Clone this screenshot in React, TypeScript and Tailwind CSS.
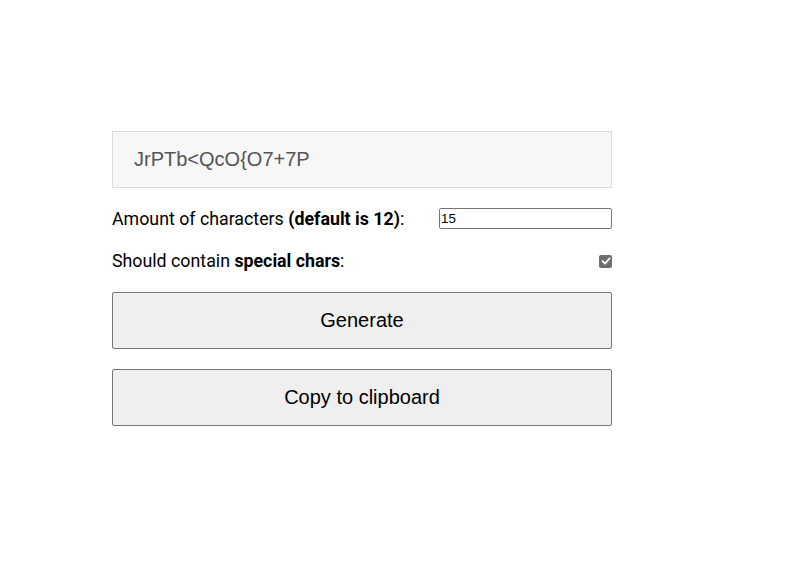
export default function App() {
  return (
    <div className="min-h-[577px] w-full bg-white pt-[131px] pl-[112px]">
      <div className="w-[500px] flex flex-col">
        <div className="h-[57px] flex items-center pl-[21px] pb-[1px] bg-[#f7f7f7] border border-[#dcdcdc] font-['Liberation_Sans',Arial,sans-serif] text-[20px] text-[#555555]">
          JrPTb&lt;QcO{"{"}O7+7P
        </div>

        <div className="mt-[20px] h-[21px] flex items-center justify-between font-['Roboto',sans-serif] text-[17.8px] text-black">
          <span className="pt-[2px]">
            Amount of characters <b className="font-bold">(default is 12)</b>:
          </span>
          <input
            type="text"
            defaultValue="15"
            className="w-[173px] h-[21px] border border-[#767676] rounded-[2px] px-[1px] font-['Liberation_Sans',Arial,sans-serif] text-[13.33px] text-black outline-none"
          />
        </div>

        <div className="mt-[21px] h-[22px] flex items-center justify-between font-['Roboto',sans-serif] text-[17.8px] text-black">
          <span>
            Should contain <b className="font-bold">special chars</b>:
          </span>
          <span className="w-[13px] h-[13px] rounded-[2px] bg-[#6e6e6e] flex items-center justify-center">
            <svg width="10" height="10" viewBox="0 0 10 10">
              <path d="M1.5 5.2 L4 7.6 L8.6 2.4" stroke="white" strokeWidth="1.8" fill="none" strokeLinecap="round" strokeLinejoin="round" />
            </svg>
          </span>
        </div>

        <button className="mt-[20px] h-[57px] w-full pb-[2px] bg-[#efefef] border border-[#767676] rounded-[2px] font-['Liberation_Sans',Arial,sans-serif] text-[20px] text-black">
          Generate
        </button>
        <button className="mt-[20px] h-[57px] w-full pb-[2px] bg-[#efefef] border border-[#767676] rounded-[2px] font-['Liberation_Sans',Arial,sans-serif] text-[20px] text-black">
          Copy to clipboard
        </button>
      </div>
    </div>
  );
}
